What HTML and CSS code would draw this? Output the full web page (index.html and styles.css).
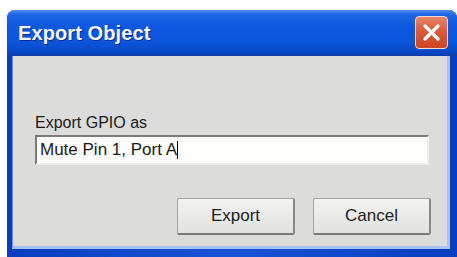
FILE: index.html
```html
<!DOCTYPE html>
<html>
<head>
<meta charset="utf-8">
<link rel="stylesheet" href="styles.css">
</head>
<body>
<div class="window">
  <div class="titlebar">
    <span class="title">Export Object</span>
    <button class="close" aria-label="Close">
      <svg width="21" height="21" viewBox="0 0 21 21"><path d="M4 4 L17 17 M17 4 L4 17" stroke="#fff" stroke-width="3.2" stroke-linecap="round"/></svg>
    </button>
  </div>
  <div class="frame">
    <div class="client">
      <label class="label">Export GPIO as</label>
      <div class="field"><span class="value">Mute Pin 1, Port A</span><span class="caret"></span></div>
      <div class="actions">
        <button class="btn">Export</button>
        <button class="btn">Cancel</button>
      </div>
    </div>
  </div>
</div>
</body>
</html>
```
FILE: styles.css
```css
html, body {
  margin: 0;
  padding: 0;
  background: #ffffff;
  overflow: hidden;
}
body {
  width: 457px;
  height: 257px;
}
.window {
  margin: 10px 0 0 7px;
  width: 450px;
  height: 256px;
  display: flex;
  flex-direction: column;
  border-radius: 8px 8px 0 0;
  overflow: hidden;
  background: #1848c8;
}
.titlebar {
  height: 46px;
  flex: none;
  display: flex;
  align-items: center;
  justify-content: space-between;
  padding: 0 9px 0 11px;
  box-sizing: border-box;
  background: linear-gradient(to bottom, #4b8ef5 0%, #1e66e6 10%, #0c58de 35%, #0a55da 70%, #0848c4 92%, #0a3aa8 100%);
}
.title {
  font-family: "Liberation Sans", Arial, sans-serif;
  font-weight: bold;
  font-size: 20px;
  color: #f4f6ff;
  text-shadow: 1px 1px 0 #0a2a8a;
  letter-spacing: 0.1px;
}
.close {
  width: 33px;
  height: 33px;
  padding: 0;
  border: 1px solid #f4d8cc;
  border-radius: 4px;
  background: linear-gradient(to bottom, #e8866a 0%, #da5a3a 45%, #cc4624 100%);
  display: flex;
  align-items: center;
  justify-content: center;
  box-sizing: border-box;
  margin-top: -2px;
}
.frame {
  flex: 1;
  display: flex;
  padding: 0 7px 0 5px;
  background: linear-gradient(to right, #0a3cc0, #1a54d6 50%, #0a3cc0);
}
.client {
  flex: 1;
  height: 193px;
  flex: none;
  width: 100%;
  box-sizing: border-box;
  background: #dcdcda;
  border-left: 1px solid #5f93f0;
  border-right: 3px solid #a8c4f4;
  border-bottom: 3px solid #a8c4f4;
  padding: 58px 0 0 22px;
  display: flex;
  flex-direction: column;
  font-family: "Liberation Sans", Arial, sans-serif;
}
.label {
  font-size: 16px;
  line-height: 18px;
  color: #1a1a1a;
  margin-bottom: 3px;
}
.field {
  width: 394px;
  height: 30px;
  box-sizing: border-box;
  background: #fdfdfb;
  border-top: 2px solid #7c7c7a;
  border-left: 2px solid #7c7c7a;
  border-right: 2px solid #eeeeec;
  border-bottom: 2px solid #eeeeec;
  display: flex;
  align-items: center;
  padding-left: 3px;
}
.value {
  font-size: 17px;
  color: #1a1a1a;
}
.caret {
  width: 1px;
  height: 18px;
  background: #000;
}
.actions {
  display: flex;
  justify-content: flex-end;
  gap: 18px;
  padding-right: 16px;
  margin-top: 33px;
}
.btn {
  width: 118px;
  height: 37px;
  box-sizing: border-box;
  font-family: "Liberation Sans", Arial, sans-serif;
  font-size: 17px;
  color: #222;
  background: linear-gradient(to bottom, #f2f2f0, #e2e2e0);
  border: 1px solid #a4a4a2;
  border-right: 2px solid #8a8a88;
  border-bottom: 2px solid #7a7a78;
  border-radius: 2px;
  padding: 0;
}
```
